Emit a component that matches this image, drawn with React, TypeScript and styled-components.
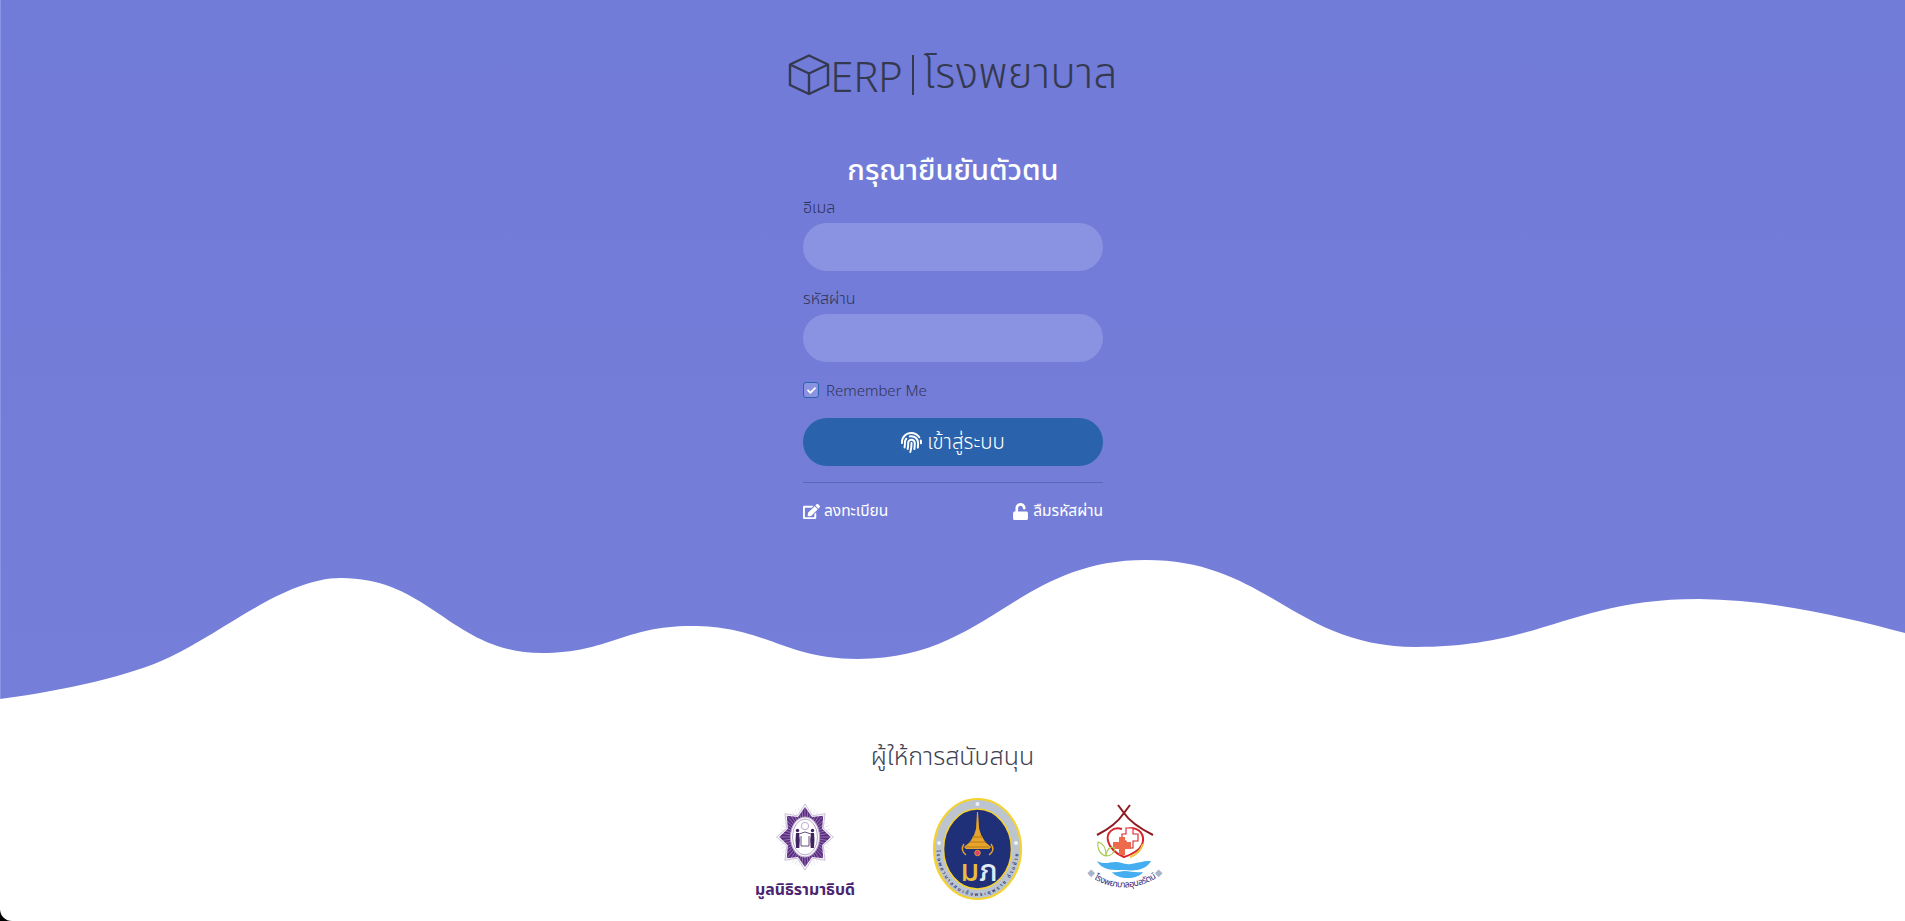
import React from "react";
import styled, { createGlobalStyle } from "styled-components";
import { FaCheck, FaEdit, FaFingerprint, FaUnlock } from "react-icons/fa";

const FONT = `"Noto Sans", "Noto Sans Thai", Lato, sans-serif`;

const Global = createGlobalStyle`
  html, body { margin: 0; padding: 0; background: #000; height: 921px; overflow: hidden; }
  body { font-family: ${FONT}; }
  * { box-sizing: border-box; }
`;

const Sheet = styled.div`
  height: 921px;
  background: #fff;
  border-bottom-left-radius: 12px;
  overflow: hidden;
`;

const Hero = styled.section`
  background: linear-gradient(180deg, #717bd8 0%, #757fd9 100%);
  border-left: 1px solid #8b94e3;
  height: 700px;
  display: flex;
  flex-direction: column;
`;

const HeroBody = styled.div`
  height: 558px;
  flex: none;
  padding-top: 50px;
  display: flex;
  flex-direction: column;
  align-items: center;
`;

const Brand = styled.h1`
  margin: 0;
  height: 50px;
  display: flex;
  align-items: center;
  font-size: 42px;
  font-weight: 300;
  color: #35394f;
  letter-spacing: -0.4px;
`;

const BrandDivider = styled.span`
  width: 2px;
  height: 40px;
  margin: 0 9px 0 10px;
  background: #35394f;
`;

const BrandName = styled.span`
  letter-spacing: 0.4px;
`;

const Title = styled.h2`
  margin: 51px 0 10px;
  height: 36px;
  line-height: 36px;
  font-size: 29px;
  font-weight: 500;
  color: #fff;
`;

const Form = styled.form`
  width: 300px;
  display: flex;
  flex-direction: column;
  gap: 17px;
`;

const Field = styled.div`
  display: flex;
  flex-direction: column;
  gap: 4px;
`;

const Label = styled.label`
  height: 22px;
  line-height: 20px;
  font-size: 16px;
  font-weight: 300;
  color: #2f3356;
`;

const Input = styled.input`
  width: 100%;
  height: 48px;
  border: 0;
  border-radius: 24px;
  background: #8a93e2;
  outline: none;
`;

const CheckRow = styled.div`
  height: 22px;
  display: flex;
  align-items: center;
  gap: 7px;
`;

const CheckBox = styled.span`
  width: 16px;
  height: 16px;
  border: 1px solid #2a63ac;
  border-radius: 3px;
  background: #8a93e2;
  color: #fff;
  display: flex;
  align-items: center;
  justify-content: center;
  font-size: 9px;
`;

const CheckText = styled.span`
  font-size: 15px;
  font-weight: 300;
  color: #2f3356;
`;

const Submit = styled.button`
  height: 48px;
  border: 0;
  border-radius: 24px;
  background: #2a63ac;
  color: #fff;
  font-family: ${FONT};
  font-size: 20.5px;
  font-weight: 300;
  display: flex;
  align-items: center;
  justify-content: center;
  gap: 5px;
  svg { font-size: 21px; }
`;

const Rule = styled.hr`
  margin: -1px 0;
  border: 0;
  height: 1px;
  background: #5c66b8;
`;

const Links = styled.div`
  display: flex;
  justify-content: space-between;
  height: 24px;
`;

const LinkItem = styled.a`
  display: flex;
  align-items: center;
  gap: 4px;
  color: #fff;
  font-size: 15.5px;
  font-weight: 400;
  svg { font-size: 17px; }
`;

const Sponsors = styled.footer`
  display: flex;
  flex-direction: column;
  align-items: center;
`;

const SponsorTitle = styled.h3`
  margin: 39px 0 24px;
  height: 32px;
  line-height: 32px;
  font-size: 25px;
  font-weight: 300;
  color: #3f4252;
`;

const LogoRow = styled.div`
  display: flex;
  gap: 55px;
`;

const Wave = styled.svg`
  display: block;
  flex: none;
  margin-left: -1px;
`;

const LogoSvg = styled.svg`
  display: block;
  flex: none;
`;

const WAVE_TOP = 558;
const waveSegments: number[][] = [
  [67, 690, 130, 676, 170, 657],
  [225, 631, 285, 578, 341, 578],
  [431, 578, 452, 653, 542, 653],
  [609, 653, 624, 626, 691, 626],
  [766, 626, 783, 659, 858, 659],
  [988, 659, 1016, 560, 1146, 560],
  [1268, 560, 1294, 647, 1416, 647],
  [1543, 647, 1572, 599, 1699, 599],
  [1775, 600, 1845, 617, 1905, 633],
];

function wavePath(): string {
  let d = `M0 ${699 - WAVE_TOP}`;
  for (const [a, b, c, e, f, g] of waveSegments) {
    d += `C${a} ${b - WAVE_TOP} ${c} ${e - WAVE_TOP} ${f} ${g - WAVE_TOP}`;
  }
  return d + "V142H0Z";
}

function CubeIcon() {
  return (
    <svg width="42" height="42" viewBox="0 0 42 42" fill="none" stroke="#35394f" strokeWidth="2.4" strokeLinejoin="round">
      <path d="M21 1.5 40 10.5V31L21 40 2 31V10.5Z" />
      <path d="M2 10.5 21 19.5 40 10.5M21 19.5V40" />
    </svg>
  );
}

function star(cx: number, cy: number, rOut: number, rIn: number, n: number) {
  const pts: string[] = [];
  for (let i = 0; i < n * 2; i++) {
    const r = i % 2 ? rIn : rOut;
    const a = (Math.PI * i) / n - Math.PI / 2;
    pts.push(`${(cx + r * Math.cos(a)).toFixed(1)},${(cy + r * Math.sin(a)).toFixed(1)}`);
  }
  return pts.join(" ");
}

function FoundationLogo() {
  const rays = Array.from({ length: 48 }, (_, i) => (i * 360) / 48);
  return (
    <LogoSvg width="130" height="110" viewBox="0 0 130 110">
      <g transform="translate(65 0) scale(0.86 1) translate(-65 0)">
        <polygon points={star(65, 42, 33, 23, 8)} fill="#fff" stroke="#b9a9c9" strokeWidth="0.8" />
        <polygon points={star(65, 42, 30, 21.5, 8)} fill="#5b2d82" />
        {rays.map((r) => (
          <line key={r} x1="65" y1="42" x2="65" y2="12" stroke="#d9cfe4" strokeWidth="0.45" transform={`rotate(${r} 65 42)`} />
        ))}
      </g>
      <ellipse cx="65" cy="42" rx="14.5" ry="20" fill="#fff" stroke="#b9a9c9" strokeWidth="1" />
      <ellipse cx="65" cy="42" rx="12.5" ry="18" fill="#fff" stroke="#6f4c93" strokeWidth="0.5" />
      <circle cx="65" cy="31" r="3.6" fill="#fff" stroke="#c9bdd6" strokeWidth="1.3" />
      <circle cx="57.5" cy="35.5" r="1.7" fill="#3f2260" />
      <circle cx="72.5" cy="35.5" r="1.7" fill="#3f2260" />
      <path d="M56 38h3l.8 7-.5 8h-3.2l-.6-8zM71 38h3l.5 7-.6 8h-3.2l-.5-8z" fill="#3f2260" />
      <path d="M59 39 65 37l6 2M61 41v10h8V41" fill="none" stroke="#3f2260" strokeWidth="0.8" />
      <text x="65" y="100" textAnchor="middle" fontSize="16" fontWeight="700" fill="#4a2470" fontFamily={FONT} textLength="100" lengthAdjust="spacingAndGlyphs">
        มูลนิธิรามาธิบดี
      </text>
    </LogoSvg>
  );
}

function HospitalSeal() {
  return (
    <LogoSvg width="105" height="110" viewBox="0 0 105 110">
      <defs>
        <path id="sealArc" d="M11.5 54A41 47 0 0 0 93.5 54" />
      </defs>
      <ellipse cx="52.5" cy="54" rx="43.5" ry="50" fill="#bcc5cf" stroke="#f4d22f" strokeWidth="2.2" />
      <ellipse cx="52.5" cy="54" rx="34" ry="40" fill="#1f2f78" stroke="#f4d22f" strokeWidth="1.6" />
      <circle cx="52.5" cy="9" r="2" fill="#eef1f5" />
      <circle cx="14" cy="48" r="2" fill="#eef1f5" />
      <circle cx="91" cy="48" r="2" fill="#eef1f5" />
      <text fontSize="5" fontWeight="600" fill="#1f2f78" fontFamily={FONT}>
        <textPath href="#sealArc" startOffset="1%" textLength="132">โรงพยาบาลสมเด็จพระยุพราช ด่านซ้าย</textPath>
      </text>
      <path d="M52 17h1l1.2 17 2 6 4 7 6 5-2 2H41l-2-2 6-5 4-7 2-6Z" fill="#e6a52a" />
      <path d="M47 42h11M44 47h17M41 52h23" stroke="#a86f16" strokeWidth="0.8" />
      <path d="M39 49c-3 4-2 8 2 11M66 49c3 4 2 8-2 11" fill="none" stroke="#e6a52a" strokeWidth="1.4" />
      <circle cx="52.5" cy="58" r="2.8" fill="#d9456a" stroke="#e6a52a" strokeWidth="0.8" />
      <text x="54" y="86" textAnchor="middle" fontSize="30" fontWeight="500" fontFamily={FONT}>
        <tspan fill="#e9bd3a">ม</tspan>
        <tspan fill="#dfeaf5">ภ</tspan>
      </text>
    </LogoSvg>
  );
}

function UboLogo() {
  return (
    <LogoSvg width="80" height="110" viewBox="0 0 80 110">
      <defs>
        <path id="uboArc" d="M9 84Q40 102 73 82" />
      </defs>
      <path d="M33 10 39 18C33 27 24 34 12 40M45 10 39 18C45 27 56 34 68 40" fill="none" stroke="#8e1a22" strokeWidth="2" />
      <path d="M37 34C28 31 21 38 23 46c2 8 9 13 16 16 9-3 18-8 19-16 1-9-7-15-15-12" fill="none" stroke="#d8232a" strokeWidth="2" />
      <path d="M45 62c6-2 11-7 13-13" fill="none" stroke="#ecc53a" strokeWidth="2" />
      <path d="M37 39h4v-6h7v6h5v7h-5v7h-7v-7h-4z" fill="#fff" stroke="#d8232a" strokeWidth="1.1" />
      <path d="M28 47h6v-5h6v5h6v7h-6v6h-6v-6h-6z" fill="#ee6a4c" />
      <path d="M13 47c5 1 8 6 8 14-5-1-9-6-8-14zM30 53c-4-2-8 0-9 8 5 0 8-2 9-8z" fill="none" stroke="#a7c94f" strokeWidth="1.1" />
      <path d="M12 66c8 4 12 1 18 1 7 0 9 3 16 2 8-1 10-3 20-3-2 4-7 8-14 9-5 1-12 0-21 0-9 0-16-3-19-9z" fill="#45aef0" />
      <path d="M27 77c5 1 8-1 13-1 6 0 9 2 18 1-3 4-9 6-15 6-7 0-13-2-16-6z" fill="#45aef0" />
      <rect x="3.5" y="75.5" width="5.5" height="5.5" transform="rotate(45 6.2 78.2)" fill="#aab4c8" />
      <rect x="71" y="75.5" width="5.5" height="5.5" transform="rotate(45 73.7 78.2)" fill="#aab4c8" />
      <text fontSize="9" fill="#3a2a78" fontFamily={FONT}>
        <textPath href="#uboArc" textLength="66">โรงพยาบาลอุบลรัตน์</textPath>
      </text>
    </LogoSvg>
  );
}

export default function App() {
  return (
    <>
      <Global />
      <Sheet>
        <Hero>
          <HeroBody>
            <Brand>
              <CubeIcon />
              ERP
              <BrandDivider />
              <BrandName>โรงพยาบาล</BrandName>
            </Brand>
            <Title>กรุณายืนยันตัวตน</Title>
            <Form>
              <Field>
                <Label>อีเมล</Label>
                <Input type="text" />
              </Field>
              <Field>
                <Label>รหัสผ่าน</Label>
                <Input type="password" />
              </Field>
              <CheckRow>
                <CheckBox><FaCheck /></CheckBox>
                <CheckText>Remember Me</CheckText>
              </CheckRow>
              <Submit type="button">
                <FaFingerprint />
                เข้าสู่ระบบ
              </Submit>
              <Rule />
              <Links>
                <LinkItem><FaEdit />ลงทะเบียน</LinkItem>
                <LinkItem><FaUnlock />ลืมรหัสผ่าน</LinkItem>
              </Links>
            </Form>
          </HeroBody>
          <Wave width="1905" height="142" viewBox="0 0 1905 142">
            <path d={wavePath()} fill="#fff" />
          </Wave>
        </Hero>
        <Sponsors>
          <SponsorTitle>ผู้ให้การสนับสนุน</SponsorTitle>
          <LogoRow>
            <FoundationLogo />
            <HospitalSeal />
            <UboLogo />
          </LogoRow>
        </Sponsors>
      </Sheet>
    </>
  );
}
